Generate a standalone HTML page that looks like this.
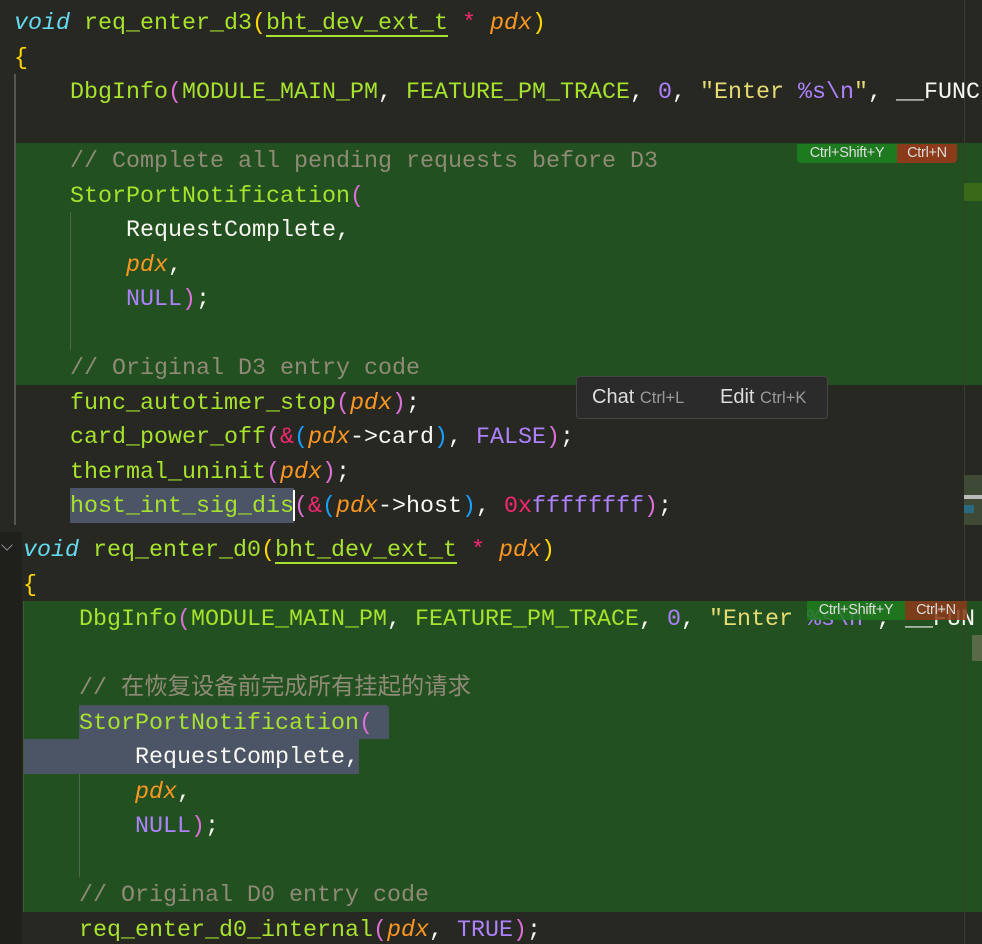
<!DOCTYPE html>
<html><head><meta charset="utf-8"><style>
*{margin:0;padding:0;box-sizing:border-box}
html,body{width:982px;height:944px;overflow:hidden}
body{background:#272822;position:relative;font-family:"Liberation Mono","Noto Sans CJK SC",monospace;font-size:23.33px;color:#f8f8f2}
.l{position:absolute;height:34.5px;line-height:34.5px;white-space:pre;margin-top:2px}
.abs{position:absolute}
.k{color:#66d9ef;font-style:italic}
.f{color:#a6e22e}
.p{color:#fd971f;font-style:italic}
.o{color:#f92672}
.n{color:#ae81ff}
.s{color:#e6db74}
.c{color:#8f8b76}
.w{color:#f8f8f2}
.y{color:#ffd700}
.m{color:#da70d6}
.b{color:#179fff}
.u{text-decoration:underline;text-decoration-color:#a6e22e;text-underline-offset:6px}
.badge{position:absolute;font-family:"Liberation Sans",sans-serif;font-size:14.5px;color:#ddd;height:19px;line-height:19px;text-align:center;letter-spacing:-0.3px}
</style></head><body>
<div class="abs" style="left:14px;top:143px;width:968px;height:242px;background:#225020"></div>
<div class="abs" style="left:70px;top:488px;width:224px;height:35px;background:#4c5566"></div>
<div class="abs" style="left:293px;top:490px;width:2px;height:31px;background:#fff"></div>
<div class="abs" style="left:14px;top:74px;width:2px;height:451px;background:#555"></div>
<div class="abs" style="left:70px;top:212px;width:1px;height:138px;background:#4a6a48"></div>
<div class="abs" style="left:0;top:532px;width:22px;height:412px;background:#1f201c"></div>
<div class="abs" style="left:23px;top:601px;width:959px;height:311px;background:#225020"></div>
<div class="abs" style="left:79px;top:705px;width:310px;height:34px;background:#4c5566;border-radius:0 4px 0 0"></div>
<div class="abs" style="left:23px;top:739px;width:336px;height:35px;background:#4c5566"></div>
<div class="abs" style="left:23px;top:601px;width:1px;height:311px;background:#3a5a38"></div>
<div class="abs" style="left:79px;top:774px;width:1px;height:103px;background:#4a6a48"></div>
<div class="abs" style="left:964px;top:0;width:1px;height:944px;background:#3a3b35"></div>
<div class="abs" style="left:964px;top:183px;width:18px;height:18px;background:#3a6a18"></div>
<div class="abs" style="left:964px;top:475px;width:18px;height:50px;background:#3e4a36"></div>
<div class="abs" style="left:964px;top:495px;width:18px;height:4px;background:#bbb"></div>
<div class="abs" style="left:964px;top:505px;width:10px;height:8px;background:#2a6a80"></div>
<div class="abs" style="left:972px;top:635px;width:10px;height:26px;background:#5a6a48"></div>

<div class="l" style="top:5px;left:14px"><span class="k">void</span> <span class="f">req_enter_d3</span><span class="y">(</span><span class="f u">bht_dev_ext_t</span> <span class="o">*</span> <span class="p">pdx</span><span class="y">)</span></div>
<div class="l" style="top:39.5px;left:14px"><span class="y">{</span></div>
<div class="l" style="top:74px;left:14px">    <span class="f">DbgInfo</span><span class="m">(</span><span class="f">MODULE_MAIN_PM</span>, <span class="f">FEATURE_PM_TRACE</span>, <span class="n">0</span>, <span class="s">"Enter </span><span class="n">%s\n</span><span class="s">"</span>, <span class="w">__FUNC</span></div>
<div class="l" style="top:143px;left:14px">    <span class="c">// Complete all pending requests before D3</span></div>
<div class="l" style="top:177.5px;left:14px">    <span class="f">StorPortNotification</span><span class="m">(</span></div>
<div class="l" style="top:212px;left:14px">        RequestComplete,</div>
<div class="l" style="top:246.5px;left:14px">        <span class="p">pdx</span>,</div>
<div class="l" style="top:281px;left:14px">        <span class="n">NULL</span><span class="m">)</span>;</div>
<div class="l" style="top:350px;left:14px">    <span class="c">// Original D3 entry code</span></div>
<div class="l" style="top:384.5px;left:14px">    <span class="f">func_autotimer_stop</span><span class="m">(</span><span class="p">pdx</span><span class="m">)</span>;</div>
<div class="l" style="top:419px;left:14px">    <span class="f">card_power_off</span><span class="m">(</span><span class="o">&amp;</span><span class="b">(</span><span class="p">pdx</span>-&gt;card<span class="b">)</span>, <span class="n">FALSE</span><span class="m">)</span>;</div>
<div class="l" style="top:453.5px;left:14px">    <span class="f">thermal_uninit</span><span class="m">(</span><span class="p">pdx</span><span class="m">)</span>;</div>
<div class="l" style="top:488px;left:14px">    <span class="f">host_int_sig_dis</span><span class="m">(</span><span class="o">&amp;</span><span class="b">(</span><span class="p">pdx</span>-&gt;host<span class="b">)</span>, <span class="o">0x</span><span class="n">ffffffff</span><span class="m">)</span>;</div>

<div class="abs" style="left:2px;top:540px;width:10px;height:10px;border-left:1.5px solid #aaa;border-bottom:1.5px solid #aaa;transform:rotate(-45deg) scale(.8)"></div>
<div class="l" style="top:532px;left:23px"><span class="k">void</span> <span class="f">req_enter_d0</span><span class="y">(</span><span class="f u">bht_dev_ext_t</span> <span class="o">*</span> <span class="p">pdx</span><span class="y">)</span></div>
<div class="l" style="top:566.5px;left:23px"><span class="y">{</span></div>
<div class="l" style="top:601px;left:23px">    <span class="f">DbgInfo</span><span class="m">(</span><span class="f">MODULE_MAIN_PM</span>, <span class="f">FEATURE_PM_TRACE</span>, <span class="n">0</span>, <span class="s">"Enter </span><span class="n">%s\n</span><span class="s">"</span>, <span class="w">__FUN</span></div>
<div class="l" style="top:670px;left:23px">    <span class="c">// 在恢复设备前完成所有挂起的请求</span></div>
<div class="l" style="top:704.5px;left:23px">    <span class="f">StorPortNotification</span><span class="m">(</span></div>
<div class="l" style="top:739px;left:23px">        RequestComplete,</div>
<div class="l" style="top:773.5px;left:23px">        <span class="p">pdx</span>,</div>
<div class="l" style="top:808px;left:23px">        <span class="n">NULL</span><span class="m">)</span>;</div>
<div class="l" style="top:877px;left:23px">    <span class="c">// Original D0 entry code</span></div>
<div class="l" style="top:911.5px;left:23px">    <span class="f">req_enter_d0_internal</span><span class="m">(</span><span class="p">pdx</span>, <span class="n">TRUE</span><span class="m">)</span>;</div>

<div class="badge" style="left:797px;top:144px;width:100px;background:#1e7a1e;border-radius:0 0 0 4px">Ctrl+Shift+Y</div>
<div class="badge" style="left:897px;top:144px;width:60px;background:#8b3a1a;border-radius:0 0 4px 0">Ctrl+N</div>
<div class="badge" style="left:807px;top:601px;width:98px;background:rgba(30,122,30,.85)">Ctrl+Shift+Y</div>
<div class="badge" style="left:905px;top:601px;width:62px;background:rgba(139,58,26,.85)">Ctrl+N</div>

<div class="abs" style="left:576px;top:376px;width:252px;height:43px;background:#2b2b2b;border:1px solid #464646;border-radius:4px;font-family:'Liberation Sans',sans-serif;line-height:41px;white-space:pre"><span style="position:absolute;left:15px;font-size:20px;color:#ddd">Chat <span style="font-size:16.5px;color:#999">Ctrl+L</span></span><span style="position:absolute;left:143px;font-size:20px;color:#ddd">Edit <span style="font-size:16.5px;color:#999">Ctrl+K</span></span></div>
</body></html>
